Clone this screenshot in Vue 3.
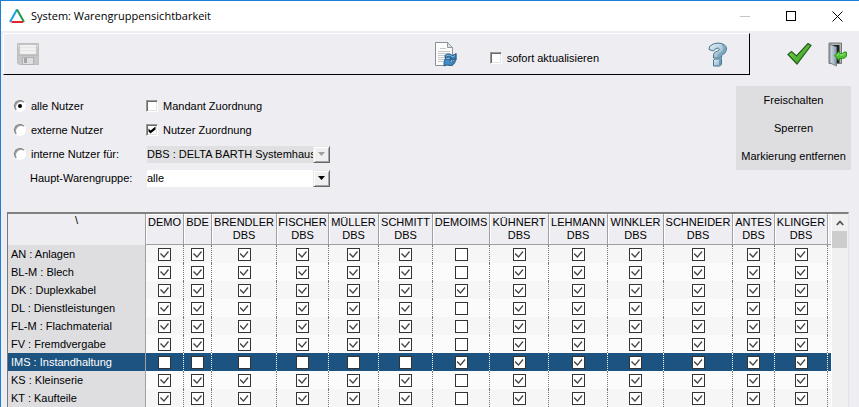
<script setup>
import { ref } from 'vue'

const userScope = ref('alle')
const instantUpdate = ref(false)
const clientAssignment = ref(false)
const userAssignment = ref(true)
const selectedKey = ref('IMS')

const columns = [
  { name: 'DEMO', sub: '', width: 38 },
  { name: 'BDE', sub: '', width: 28 },
  { name: 'BRENDLER', sub: 'DBS', width: 65 },
  { name: 'FISCHER', sub: 'DBS', width: 52 },
  { name: 'MÜLLER', sub: 'DBS', width: 50 },
  { name: 'SCHMITT', sub: 'DBS', width: 54 },
  { name: 'DEMOIMS', sub: '', width: 57 },
  { name: 'KÜHNERT', sub: 'DBS', width: 59 },
  { name: 'LEHMANN', sub: 'DBS', width: 59 },
  { name: 'WINKLER', sub: 'DBS', width: 56 },
  { name: 'SCHNEIDER', sub: 'DBS', width: 69 },
  { name: 'ANTES', sub: 'DBS', width: 42 },
  { name: 'KLINGER', sub: 'DBS', width: 53 },
]

const withoutIms = '1111110111111'
const everything = '1111111111111'
const imsOnly = '0000001111111'

const makeRow = (key, label, mask) => ({ key, label, flags: [...mask].map((c) => c === '1') })

const rows = ref([
  makeRow('AN', 'Anlagen', withoutIms),
  makeRow('BL-M', 'Blech', withoutIms),
  makeRow('DK', 'Duplexkabel', everything),
  makeRow('DL', 'Dienstleistungen', withoutIms),
  makeRow('FL-M', 'Flachmaterial', withoutIms),
  makeRow('FV', 'Fremdvergabe', withoutIms),
  makeRow('IMS', 'Instandhaltung', imsOnly),
  makeRow('KS', 'Kleinserie', withoutIms),
  makeRow('KT', 'Kaufteile', withoutIms),
])

function setSelected(value) {
  const row = rows.value.find((r) => r.key === selectedKey.value)
  if (row) row.flags = row.flags.map(() => value)
}
</script>

<template>
  <div class="window">
    <header class="titlebar">
      <svg class="app-logo" width="16" height="14" viewBox="0 0 16 14">
        <path d="M8 0.500 L1 13" stroke="#1ba1e2" stroke-width="2" fill="none" />
        <path d="M8 0.500 L15 13" stroke="#1f9a48" stroke-width="2" fill="none" />
        <path d="M2.500 13 H14" stroke="#e3242b" stroke-width="2" fill="none" />
      </svg>
      <h1 class="title">System: Warengruppensichtbarkeit</h1>
      <button class="win-btn" type="button" aria-label="Minimieren">
        <svg width="11" height="11" viewBox="0 0 11 11"><path d="M0 5.5H10" stroke="#c4c4c4" /></svg>
      </button>
      <button class="win-btn" type="button" aria-label="Maximieren">
        <svg width="11" height="11" viewBox="0 0 11 11"><rect x=".5" y=".5" width="9" height="9" fill="none" stroke="#000" /></svg>
      </button>
      <button class="win-btn" type="button" aria-label="Schließen">
        <svg width="11" height="11" viewBox="0 0 11 11"><path d="M.5 .5L10.500 10.500M10.500 .5L.5 10.500" stroke="#000" /></svg>
      </button>
    </header>

    <div class="toolbar">
      <div class="tool-panel">
        <button class="icon-btn save" type="button" aria-label="Speichern" disabled>
          <svg width="22" height="22" viewBox="0 0 22 22">
            <path d="M0 1Q0 0 1 0H21Q22 0 22 1V22H2L0 20Z" fill="#bebec0" />
            <path d="M1 1H21V21H2.500L1 19.500Z" fill="#c6c6c8" />
            <rect x="3" y="2" width="16" height="9" fill="#f1f1f2" />
            <path d="M3 4.500H19M3 7.500H19" stroke="#e6e6e7" />
            <path d="M1 12.500H21" stroke="#bababc" />
            <rect x="5" y="14" width="12" height="8" fill="#b2b2b4" />
            <rect x="6" y="15" width="10" height="6" fill="#dededf" />
            <rect x="7" y="15" width="3" height="5" fill="#a6a6a8" />
            <rect x="1" y="2" width="1" height="2" fill="#e4e4e4" />
            <rect x="20" y="2" width="1" height="2" fill="#e4e4e4" />
          </svg>
        </button>
        <div class="refresh-group">
          <button class="icon-btn" type="button" aria-label="Aktualisieren">
            <svg width="22" height="25" viewBox="0 0 22 25">
              <path d="M.5 .5H12.500L17.500 5.500V23.500H.5Z" fill="#fcfcfc" stroke="#8b9196" />
              <path d="M12.500 .5V5.500H17.500Z" fill="#dfe4e6" stroke="#8f9a9c" />
              <path d="M5 6.500H11M3 9.500H15M3 11.500H15M3 13.500H10M3 15.500H9M3 17.500H9M3 19.500H8" stroke="#c5c7c8" />
              <path d="M10 16.500V13.500Q11.500 11.500 15 12L17.500 13.500L21.200 11.500V18H14L15.800 15.500Q13 14.500 10 16.500Z" fill="#2f78b4" stroke="#184f80" stroke-width=".8" />
              <path d="M9 19.500L10 17H16.500L14.500 20Q17 20.800 20.500 18.500Q19.500 23.500 15 23.500L12.500 22.500L9 24Z" fill="#3f8dc6" stroke="#184f80" stroke-width=".8" />
              <path d="M11 14Q13 12.500 15.500 13.500L18 15L20 13.500" fill="none" stroke="#85bce2" />
            </svg>
          </button>
          <label class="check-label">
            <input v-model="instantUpdate" class="box sunken" type="checkbox" />
            <span>sofort aktualisieren</span>
          </label>
        </div>
        <button class="icon-btn" type="button" aria-label="Hilfe">
          <svg width="20" height="25" viewBox="0 0 20 25">
            <defs>
              <linearGradient id="helpFill" x1="0" y1="0" x2="1" y2="1">
                <stop offset="0" stop-color="#e6f2f8" />
                <stop offset="1" stop-color="#7fa9c2" />
              </linearGradient>
            </defs>
            <path d="M1.500 4.500Q5 1 10 1Q18.500 1.500 18.500 7Q18.500 11 13.500 13.500V16H5.500V12.500Q5.500 10.500 9.500 9Q11.500 8 11.500 7.200Q11 6 9 6.200Q7 6.500 5.500 9L1 7.500Z" fill="url(#helpFill)" stroke="#47748e" />
            <path d="M13 3Q15.500 4.500 15 7.500Q14 10 10.500 11.500Q9.500 12.500 9.500 15.500H13V13.200Q18 10.800 18 7Q18 3.800 14.500 2Z" fill="#6f9cb7" opacity=".7" />
            <path d="M5.500 18L7.500 17H13.500V22.500L11.500 24H5.500Z" fill="url(#helpFill)" stroke="#47748e" />
            <path d="M11 18.500L13 17.500V22.300L11 23.500Z" fill="#6f9cb7" />
          </svg>
        </button>
      </div>
      <div class="tool-end">
        <button class="icon-btn" type="button" aria-label="Bestätigen">
          <svg width="25" height="24" viewBox="0 0 25 24">
            <defs>
              <linearGradient id="okFill" x1="0" y1="0" x2="1" y2="1">
                <stop offset="0" stop-color="#8ade5c" />
                <stop offset="1" stop-color="#249214" />
              </linearGradient>
            </defs>
            <path d="M1 12.500L4.500 9.500L9.500 14L21 1.500L24 3.500L10 22Z" fill="url(#okFill)" stroke="#245c1c" stroke-width="1.200" />
          </svg>
        </button>
        <button class="icon-btn" type="button" aria-label="Beenden">
          <svg width="19" height="25" viewBox="0 0 19 25">
            <defs>
              <linearGradient id="doorFill" x1="0" y1="0" x2="1" y2="0">
                <stop offset="0" stop-color="#d7e3ec" />
                <stop offset="1" stop-color="#8496a6" />
              </linearGradient>
            </defs>
            <path d="M1 1H13.500V21.500H1Z" fill="#b4b4b4" stroke="#777" />
            <path d="M3 3H11.500V21H3Z" fill="#222" />
            <path d="M2 2.500L8.500 5V24L2 21Z" fill="url(#doorFill)" stroke="#6a7885" stroke-width=".8" />
            <path d="M6.500 13.500L11.500 9V11.500Q15.500 12 16 10H18.500V14Q17.500 17 11.500 16.500V19Z" fill="#4bc432" stroke="#2f8a22" stroke-width=".9" />
            <path d="M9 13.500L11.500 11.500M12 13Q16 13.500 17 11.500" fill="none" stroke="#a4ed83" />
          </svg>
        </button>
      </div>
    </div>

    <section class="filters">
      <form class="filter-grid" @submit.prevent>
        <label class="radio-label">
          <input v-model="userScope" class="radio" type="radio" name="scope" value="alle" />
          <span>alle Nutzer</span>
        </label>
        <label class="check-label">
          <input v-model="clientAssignment" class="box sunken" type="checkbox" />
          <span>Mandant Zuordnung</span>
        </label>

        <label class="radio-label">
          <input v-model="userScope" class="radio" type="radio" name="scope" value="extern" />
          <span>externe Nutzer</span>
        </label>
        <label class="check-label">
          <input v-model="userAssignment" class="box sunken" type="checkbox" />
          <span>Nutzer Zuordnung</span>
        </label>

        <label class="radio-label">
          <input v-model="userScope" class="radio" type="radio" name="scope" value="intern" />
          <span>interne Nutzer für:</span>
        </label>
        <div class="combo disabled">
          <select class="combo-field" aria-label="interne Nutzer für" disabled>
            <option>DBS : DELTA BARTH Systemhaus</option>
          </select>
          <span class="combo-arrow">
            <svg width="7" height="4" viewBox="0 0 7 4"><path d="M0 0H7L3.500 4Z" fill="currentColor" /></svg>
          </span>
        </div>

        <label class="group-label" for="main-group">Haupt-Warengruppe:</label>
        <div class="combo">
          <select id="main-group" class="combo-field">
            <option>alle</option>
          </select>
          <span class="combo-arrow">
            <svg width="7" height="4" viewBox="0 0 7 4"><path d="M0 0H7L3.500 4Z" fill="currentColor" /></svg>
          </span>
        </div>
      </form>

      <div class="actions">
        <button class="action" type="button" @click="setSelected(true)">Freischalten</button>
        <button class="action" type="button" @click="setSelected(false)">Sperren</button>
        <button class="action" type="button" @click="selectedKey = ''">Markierung entfernen</button>
      </div>
    </section>

    <section class="grid-frame">
      <table class="matrix">
        <colgroup>
          <col class="col-label" />
          <col v-for="c in columns" :key="c.name" :style="{ width: c.width + 'px' }" />
          <col />
        </colgroup>
        <thead>
          <tr>
            <th class="corner" scope="col">\</th>
            <th v-for="c in columns" :key="c.name" class="head" scope="col">
              {{ c.name }}<template v-if="c.sub"><br />{{ c.sub }}</template>
            </th>
            <td class="head filler"></td>
          </tr>
        </thead>
        <tbody>
          <tr
            v-for="row in rows"
            :key="row.key"
            class="row"
            :class="{ selected: row.key === selectedKey }"
            @click="selectedKey = row.key"
          >
            <th class="row-label" scope="row">{{ row.key }} : {{ row.label }}</th>
            <td v-for="(c, i) in columns" :key="c.name" class="cell">
              <input
                v-model="row.flags[i]"
                class="box flat"
                type="checkbox"
                :aria-label="row.label + ' ' + c.name"
              />
            </td>
            <td></td>
          </tr>
        </tbody>
      </table>
      <div class="scrollbar">
        <button class="scroll-up" type="button" aria-label="Nach oben">
          <svg width="8" height="6" viewBox="0 0 8 6"><path d="M.8 5L4 1.500L7.200 5" fill="none" stroke="#505050" stroke-width="1.800" /></svg>
        </button>
        <div class="scroll-thumb"></div>
      </div>
    </section>
  </div>
</template>

<style>
body {
  background: #eeedf2;
}
</style>

<style scoped>
.window {
  box-sizing: border-box;
  min-height: 100vh;
  display: flex;
  flex-direction: column;
  border-top: 1px solid #1a7fd6;
  border-left: 1px solid #1a7fd6;
  background: #eeedf2;
  color: #000;
  font: 11px/14px 'Liberation Sans', Arial, sans-serif;
}

button,
select {
  margin: 0;
  padding: 0;
  border: 0;
  background: none;
  color: inherit;
  font: inherit;
}

svg {
  display: block;
}

.titlebar {
  display: flex;
  align-items: center;
  height: 30px;
  padding-left: 8px;
  background: #fff;
}

.title {
  flex: 1;
  margin: 0 0 0 6px;
  font: 400 11px/16px 'Open Sans', 'Noto Sans', sans-serif;
}

.win-btn {
  display: grid;
  place-items: center;
  width: 46px;
  height: 30px;
  padding-left: 3px;
}

.toolbar {
  display: flex;
  padding: 2px 12px 0 2px;
}

.tool-panel {
  flex: 1;
  display: flex;
  align-items: center;
  gap: 109px;
  box-sizing: border-box;
  height: 42px;
  padding: 0 21px 0 13px;
  border: 1px solid #fff;
  border-right-color: #000;
  border-bottom-color: #000;
}

.save {
  margin-right: auto;
}

.refresh-group {
  display: flex;
  align-items: center;
  gap: 33px;
}

.refresh-group .check-label {
  padding-top: 8px;
}

.tool-end {
  display: flex;
  align-items: center;
  gap: 16px;
  padding-left: 37px;
}

.check-label,
.radio-label {
  display: flex;
  align-items: center;
  gap: 5px;
}

.filters {
  display: flex;
  justify-content: space-between;
  align-items: flex-start;
  padding: 11px 8px 21px 13px;
}

.filter-grid {
  display: grid;
  grid-template-columns: 132px 184px;
  grid-auto-rows: 24px;
  align-items: center;
  padding-top: 8px;
}

.group-label {
  padding-left: 16px;
}

.box,
.radio {
  appearance: none;
  flex: none;
  box-sizing: border-box;
  margin: 0;
  background: #fff;
}

.box {
  display: grid;
  place-items: center;
}

.box::before {
  width: 9px;
  height: 9px;
}

.box:checked::before {
  content: '';
}

.sunken {
  width: 12px;
  height: 12px;
  border: 1px solid #fff;
  border-top-color: #9a9a9a;
  border-left-color: #9a9a9a;
  box-shadow: inset 1px 1px #6a6a6a, inset -1px -1px #e3e3e3;
}

.sunken::before {
  background: #000;
  clip-path: polygon(1px 3px, 3px 5px, 8px 1px, 8px 4px, 3px 8px, 1px 6px);
}

.flat {
  width: 13px;
  height: 13px;
  margin: 3px auto 2px;
  border: 1px solid #333;
}

.flat::before {
  background: #444;
  clip-path: polygon(0 4px, 1px 3px, 4px 6px, 8px 1px, 9px 2px, 4px 8px);
}

.radio {
  display: grid;
  place-items: center;
  width: 12px;
  height: 12px;
  border: 1px solid #fff;
  border-top-color: #777;
  border-left-color: #777;
  border-radius: 50%;
  box-shadow: inset 1px 1px #999;
}

.radio:checked::before {
  content: '';
  width: 4px;
  height: 4px;
  border-radius: 50%;
  background: #000;
}

.combo {
  display: flex;
  height: 17px;
  margin-left: 1px;
  background: #fff;
}

.combo-field {
  appearance: none;
  flex: 1;
  min-width: 0;
  overflow: hidden;
  text-overflow: clip;
  opacity: 1;
}

.combo.disabled {
  background: #e0e0e2;
}

.combo-arrow {
  display: grid;
  place-items: center;
  box-sizing: border-box;
  width: 17px;
  border: 1px solid #e8e8e8;
  border-right-color: #666;
  border-bottom-color: #666;
  background: #f0f0f0;
  box-shadow: inset 1px 1px #fff, inset -1px -1px #a5a5a5;
  pointer-events: none;
}

.disabled .combo-arrow {
  color: #a0a0a0;
}

.actions {
  display: flex;
  flex-direction: column;
  width: 115px;
  background: #dedee0;
}

.action {
  height: 28px;
}

.grid-frame {
  flex: 1;
  display: flex;
  margin: 1px 10px 0 6px;
  border: solid #777;
  border-width: 2px 1px 0;
  border-top-color: #808080;
  border-right-color: #e3e3e3;
  background: #fff;
}

.matrix {
  flex: 1;
  align-self: flex-start;
  width: 0;
  table-layout: fixed;
  border-collapse: separate;
  border-spacing: 0;
}

.col-label {
  width: 138px;
}

th,
td {
  padding: 0;
  font-weight: 400;
}

.corner,
.head {
  box-sizing: border-box;
  height: 31px;
  padding-top: 2px;
  border-right: 1px solid #a0a0a0;
  background: #eeedf2;
  line-height: 13px;
  vertical-align: top;
  white-space: nowrap;
}

.head {
  border-bottom: 1px solid #a0a0a0;
  box-shadow: inset 1px 1px #fff;
}

.corner {
  padding-top: 0;
}

.filler {
  border-right: 0;
}

.row {
  background: #f6f6f6;
}

.row:nth-child(even) {
  background: #fbfbfb;
}

.row-label {
  padding-left: 3px;
  border-right: 1px solid #a0a0a0;
  background: #dedee0;
  text-align: left;
  line-height: 18px;
  white-space: nowrap;
}

.cell {
  border-right: 1px dotted #777;
}

.row.selected,
.selected .row-label {
  background: #1c5380;
  color: #fff;
}

.selected .cell {
  border-right-color: #fff;
}

.scrollbar {
  width: 16px;
  margin-left: 1px;
  background: #f0f0f0;
}

.scroll-up {
  display: grid;
  place-items: center;
  width: 100%;
  height: 17px;
}

.scroll-thumb {
  height: 17px;
  margin-right: 1px;
  background: #cdcdcd;
}
</style>
